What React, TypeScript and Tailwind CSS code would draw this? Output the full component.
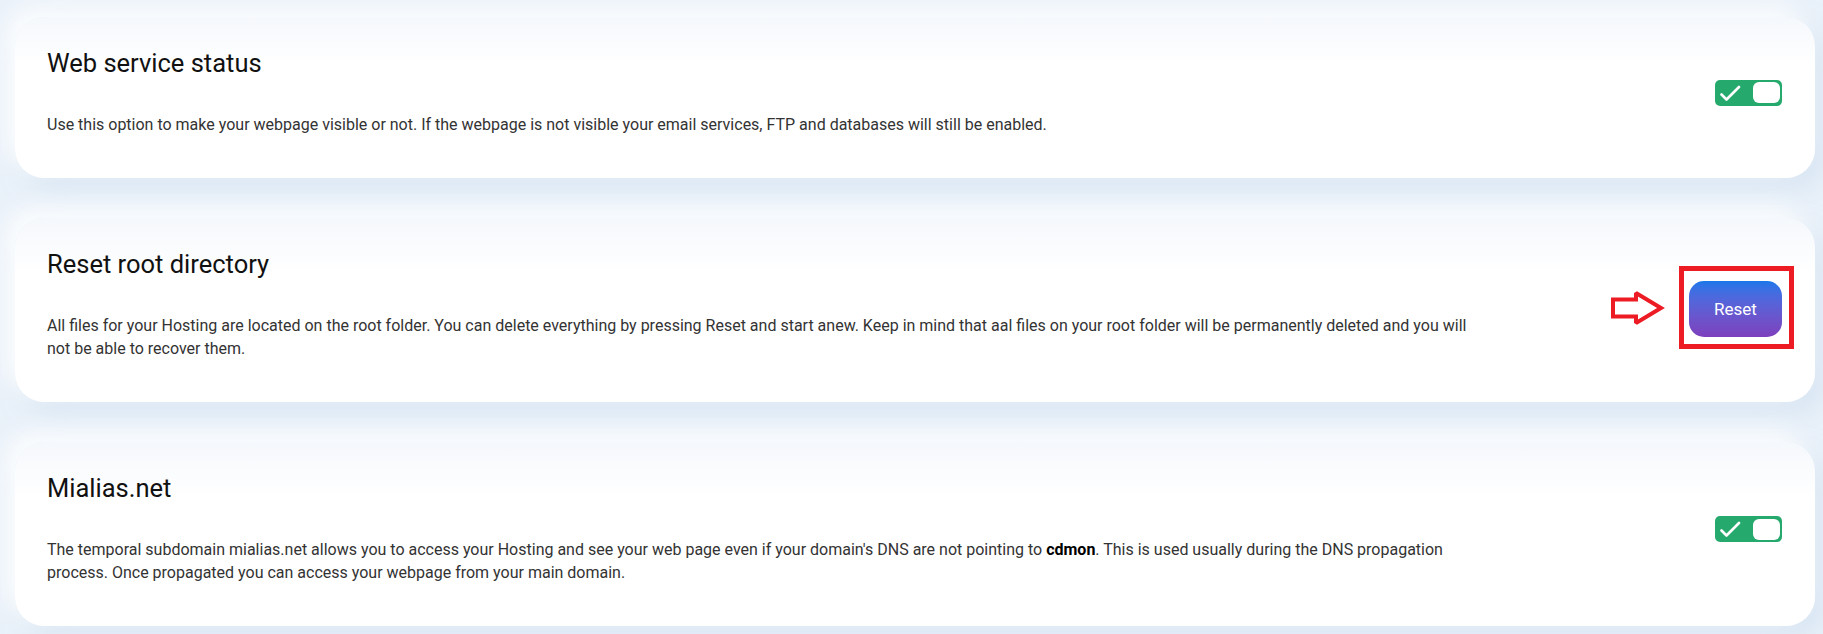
import React from "react";

function Toggle() {
  return (
    <div className="flex h-[26px] w-[67px] items-center justify-between rounded-[5px] bg-[#26a96c] pl-[5px] pr-[2px]">
      <svg width="22" height="20" viewBox="0 0 22 20" fill="none">
        <path d="M1.5 11.5 L6.5 16.5 L19 4" stroke="#ffffff" strokeWidth="2.6" strokeLinecap="round" strokeLinejoin="round" />
      </svg>
      <div className="h-[21px] w-[27px] rounded-[6px] bg-white" />
    </div>
  );
}

function ResetButton() {
  return (
    <div className="relative mt-[8px]">
      <svg
        className="absolute left-[-78px] top-[9px]"
        width="54"
        height="36"
        viewBox="0 0 54 36"
        fill="none"
      >
        <polygon
          points="2,9.5 25,9.5 25,3 50,18 25,33 25,26.5 2,26.5"
          stroke="#ed1c24"
          strokeWidth="4"
          strokeLinejoin="miter"
          strokeMiterlimit="2"
        />
      </svg>
      <div className="pointer-events-none absolute -left-[10px] -top-[15px] -right-[12px] -bottom-[12px] border-[5px] border-[#ed1c24]" />
      <button className="flex h-[56px] w-[93px] items-center justify-center rounded-[15px] bg-linear-to-b from-[#1677ea] to-[#7d3fbd] text-[17px] font-normal text-white">
        Reset
      </button>
    </div>
  );
}

function Card({
  title,
  children,
  action,
}: {
  title: string;
  children: React.ReactNode;
  action: React.ReactNode;
}) {
  return (
    <div className="flex items-center justify-between rounded-[29px] bg-linear-to-b from-[#f5f8fc] to-white to-[30%] pb-[42px] pl-8 pr-[33px] pt-8 shadow-[-10px_-10px_24px_rgba(255,255,255,0.9),10px_10px_24px_rgba(200,219,238,0.55)]">
      <div className="flex flex-col">
        <h2 className="text-[25.5px] font-normal leading-[29px] text-[#111111]">{title}</h2>
        <p className="mt-9 max-w-[1430px] text-[16px] leading-[22.4px] text-[#333333]">{children}</p>
      </div>
      <div className="shrink-0">{action}</div>
    </div>
  );
}

export default function App() {
  return (
    <div
      className="min-h-[634px] w-full bg-[#e9f1f9] pb-[10px] pl-[15px] pr-2 pt-[17px]"
      style={{ fontFamily: "Roboto, 'Noto Sans', Arial, sans-serif" }}
    >
      <div className="flex flex-col gap-10">
        <Card title="Web service status" action={<Toggle />}>
          Use this option to make your webpage visible or not. If the webpage is not visible your email services, FTP and databases will still be enabled.
        </Card>
        <Card title="Reset root directory" action={<ResetButton />}>
          All files for your Hosting are located on the root folder. You can delete everything by pressing Reset and start anew. Keep in mind that aal files on your root folder will be permanently deleted and you will not be able to recover them.
        </Card>
        <Card title="Mialias.net" action={<Toggle />}>
          The temporal subdomain mialias.net allows you to access your Hosting and see your web page even if your domain's DNS are not pointing to{" "}
          <b className="font-bold text-black">cdmon</b>. This is used usually during the DNS propagation process. Once propagated you can access your webpage from your main domain.
        </Card>
      </div>
    </div>
  );
}
